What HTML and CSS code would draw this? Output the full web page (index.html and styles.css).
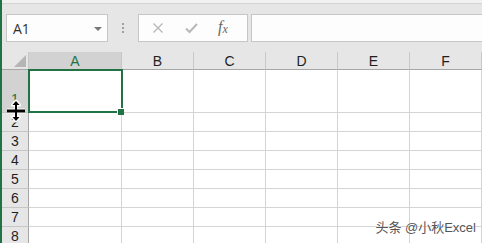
FILE: index.html
```html
<!DOCTYPE html>
<html>
<head>
<meta charset="utf-8">
<link rel="stylesheet" href="styles.css">
</head>
<body>
<div class="app">
  <div class="topstrip"></div>
  <div class="bar">
    <div class="namebox">
      <span class="ref">A1</span>
      <svg class="caret" width="8" height="4" viewBox="0 0 8 4"><path d="M0 0H8L4 4Z" fill="#777"/></svg>
    </div>
    <div class="dots"><i></i><i></i><i></i></div>
    <div class="fxbox">
      <svg class="ico" width="12" height="12" viewBox="0 0 12 12"><path d="M1.5 1.5L10.5 10.5M10.5 1.5L1.5 10.5" stroke="#b8b8b8" stroke-width="1.4" fill="none"/></svg>
      <svg class="ico" width="13" height="12" viewBox="0 0 13 12"><path d="M1 6.5L4.5 10L12 2" stroke="#b8b8b8" stroke-width="2" fill="none"/></svg>
      <span class="fx">f<sub>x</sub></span>
    </div>
    <div class="formula"></div>
  </div>
  <div class="sheet">
    <div class="corner"><svg width="12" height="12" viewBox="0 0 12 12"><path d="M12 0V12H0Z" fill="#b5b5b5"/></svg></div>
    <div class="ch sel">A</div>
    <div class="ch">B</div>
    <div class="ch">C</div>
    <div class="ch">D</div>
    <div class="ch">E</div>
    <div class="ch">F</div>

    <div class="rh sel tall">1</div>
    <div class="c"></div><div class="c"></div><div class="c"></div><div class="c"></div><div class="c"></div><div class="c"></div>
    <div class="rh">2</div>
    <div class="c"></div><div class="c"></div><div class="c"></div><div class="c"></div><div class="c"></div><div class="c"></div>
    <div class="rh">3</div>
    <div class="c"></div><div class="c"></div><div class="c"></div><div class="c"></div><div class="c"></div><div class="c"></div>
    <div class="rh">4</div>
    <div class="c"></div><div class="c"></div><div class="c"></div><div class="c"></div><div class="c"></div><div class="c"></div>
    <div class="rh">5</div>
    <div class="c"></div><div class="c"></div><div class="c"></div><div class="c"></div><div class="c"></div><div class="c"></div>
    <div class="rh">6</div>
    <div class="c"></div><div class="c"></div><div class="c"></div><div class="c"></div><div class="c"></div><div class="c"></div>
    <div class="rh">7</div>
    <div class="c"></div><div class="c"></div><div class="c"></div><div class="c"></div><div class="c"></div><div class="c"></div>
    <div class="rh">8</div>
    <div class="c"></div><div class="c"></div><div class="c"></div><div class="c"></div><div class="c"></div><div class="c"></div>

    <div class="selection"><span class="handle"></span></div>
    <svg class="cursor" width="22" height="24" viewBox="0 0 22 24">
      <g stroke="#fff" stroke-width="3" fill="#fff" stroke-linejoin="round">
        <path d="M11 2L7.5 6H14.5Z"/><path d="M11 22L7.5 18H14.5Z"/>
        <path d="M11 5V19"/><path d="M2 12H20" stroke-width="5"/>
      </g>
      <g fill="#000">
        <path d="M11 2L7.5 6H14.5Z"/><path d="M11 22L7.5 18H14.5Z"/>
        <rect x="10" y="5" width="2" height="14"/><rect x="2" y="10.5" width="18" height="3"/>
      </g>
    </svg>
  </div>
  <div class="watermark">头条 @小秋Excel</div>
</div>
</body>
</html>
```

FILE: styles.css
```css
html, body {
  margin: 0;
  padding: 0;
  background: #fff;
}
.app {
  position: relative;
  width: 480px;
  height: 243px;
  overflow: hidden;
  border-left: 2px solid #217346;
  font-family: "Liberation Sans", Arial, sans-serif;
}
.topstrip {
  height: 3px;
  background: #f1f1f1;
  border-bottom: 1px solid #d4d4d4;
}
.bar {
  height: 48px;
  box-sizing: border-box;
  padding-top: 10px;
  background: #e6e6e6;
  display: flex;
  align-items: flex-start;
}
.namebox {
  margin-left: 4px;
  width: 102px;
  height: 28px;
  box-sizing: border-box;
  border: 1px solid #c6c6c6;
  background: #fdfdfd;
  display: flex;
  align-items: center;
  justify-content: space-between;
  padding: 0 5px 0 6px;
}
.ref {
  font-family: "Open Sans", "Noto Sans", sans-serif;
  font-size: 14px;
  color: #333;
  padding-top: 1px;
}
.caret { margin-top: 1px; }
.dots {
  margin-left: 14px;
  margin-top: 9px;
  width: 2px;
  display: flex;
  flex-direction: column;
  gap: 2px;
}
.dots i {
  display: block;
  width: 2px;
  height: 2px;
  background: #a0a0a0;
}
.fxbox {
  margin-left: 14px;
  width: 110px;
  height: 28px;
  box-sizing: border-box;
  border: 1px solid #c6c6c6;
  background: #fdfdfd;
  display: flex;
  align-items: center;
  padding-left: 13px;
  gap: 21px;
}
.fx {
  font-family: "Liberation Serif", "DejaVu Serif", serif;
  font-style: italic;
  font-size: 16px;
  color: #666;
  margin-left: -1px;
  margin-top: -2px;
}
.fx sub {
  font-size: 12px;
  vertical-align: -1px;
}
.formula {
  margin-left: 3px;
  flex: 1;
  height: 28px;
  box-sizing: border-box;
  border: 1px solid #c6c6c6;
  border-right: none;
  background: #fdfdfd;
}
.sheet {
  position: relative;
  display: grid;
  grid-template-columns: 27px 93px repeat(5, 72px);
  grid-template-rows: 18px 43px repeat(7, 19px);
}
.sheet > div {
  box-sizing: border-box;
}
.corner {
  background: #e6e6e6;
  border-right: 1px solid #c6c6c6;
  border-bottom: 1px solid #a6a6a6;
  display: flex;
  align-items: flex-end;
  justify-content: flex-end;
  padding: 0 2px 2px 0;
}
.corner svg { display: block; }
.ch {
  background: #e6e6e6;
  border-right: 1px solid #c8c8c8;
  border-bottom: 1px solid #a6a6a6;
  font-size: 14px;
  line-height: 17px;
  padding-top: 1px;
  text-align: center;
  color: #1f1f1f;
}
.ch.sel {
  background: #d2d2d2;
  color: #217346;
}
.rh {
  background: #e6e6e6;
  border-right: 1px solid #a6a6a6;
  border-bottom: 1px solid #c6c6c6;
  font-size: 14px;
  line-height: 17px;
  padding-top: 1px;
  text-align: center;
  color: #1f1f1f;
}
.rh.tall {
  display: flex;
  align-items: flex-end;
  justify-content: center;
  padding-bottom: 4px;
}
.rh.sel {
  background: #d2d2d2;
  color: #217346;
}
.c {
  border-right: 1px solid #d4d4d4;
  border-bottom: 1px solid #d4d4d4;
}
.selection {
  position: absolute;
  left: 26px;
  top: 17px;
  width: 95px;
  height: 44px;
  box-sizing: border-box;
  border: 2px solid #217346;
}
.handle {
  position: absolute;
  right: -3px;
  bottom: -4px;
  width: 6px;
  height: 6px;
  background: #217346;
  border-left: 1px solid #fff;
  border-top: 1px solid #fff;
}
.cursor {
  position: absolute;
  left: 3px;
  top: 47px;
}
.watermark {
  position: absolute;
  right: 6px;
  bottom: 7px;
  font-family: "Liberation Sans", "Noto Sans CJK SC", sans-serif;
  font-size: 13px;
  color: #555;
  text-shadow: 0 0 1px #fff, 0 0 2px #fff;
}
```
